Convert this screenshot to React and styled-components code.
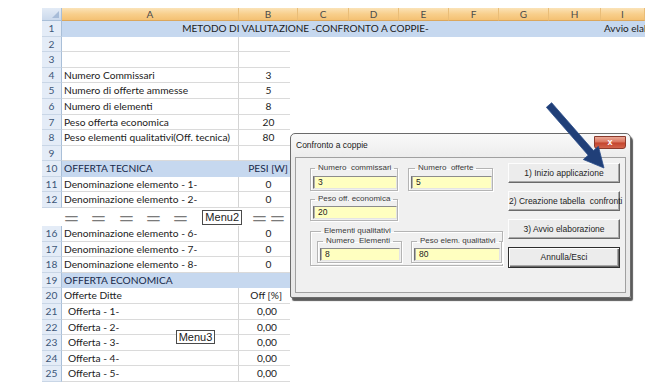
import React from 'react';
import styled, { createGlobalStyle } from 'styled-components';

const Global = createGlobalStyle`
  html, body { margin: 0; padding: 0; background: #fff; }
  body { font-family: Lato, "Liberation Sans", sans-serif; }
  * { box-sizing: border-box; }
`;

const ROW_H = 15.55;
const CELL_FS = 10.2;

const Page = styled.div`
  position: relative;
  width: 672px;
  height: 390px;
  overflow: hidden;
  padding: 8px 0 0 42px;
`;

const Sheet = styled.div`
  display: flex;
  flex-direction: column;
  width: 603px;
`;

const HeaderRow = styled.div`
  display: grid;
  grid-template-columns: 20px 177px 59px 51px 50px 50px 50px 50px 52px 44px;
  height: 13.3px;
`;

const Corner = styled.div`
  position: relative;
  background: linear-gradient(#e3ebf6, #cbd9ec);
  border-right: 1px solid #a9bfd8;
  border-bottom: 1px solid #a9bfd8;
  &::after {
    content: '';
    position: absolute;
    right: 2px;
    bottom: 2px;
    border-style: solid;
    border-width: 0 0 7px 7px;
    border-color: transparent transparent #a7bcd8 transparent;
  }
`;

const ColHead = styled.div`
  background: linear-gradient(#fbe3b8, #f8cf8c 50%, #f4c173);
  border-right: 1px solid #e9bd78;
  border-bottom: 1px solid #dba75d;
  font-size: 10px;
  line-height: 12.3px;
  color: #4b4b4b;
  text-align: center;
`;

const TitleRow = styled.div`
  display: grid;
  grid-template-columns: 20px 487px 52px 44px;
  height: ${ROW_H}px;
`;

const NumCell = styled.div`
  background: #e4ecf7;
  border-right: 1px solid #a9bfd8;
  border-bottom: 1px solid #c9d6e6;
  font-size: 10.2px;
  line-height: ${ROW_H - 1}px;
  color: #3c5677;
  text-align: center;
`;

const BandCell = styled.div`
  background: #c6d8ef;
  font-size: 10px;
  line-height: ${ROW_H}px;
  color: #1b1b1b;
  text-align: ${(p) => p.$align || 'left'};
  white-space: nowrap;
  overflow: hidden;
  padding-left: ${(p) => (p.$align === 'left' ? '3px' : '0')};
`;

const Row = styled.div`
  display: grid;
  grid-template-columns: 20px 177px 51px;
  height: ${ROW_H}px;
`;

const LabelCell = styled.div`
  background: ${(p) => (p.$band ? '#c6d8ef' : '#fff')};
  border-right: 1px solid ${(p) => (p.$band ? '#c6d8ef' : '#d4d4d4')};
  border-bottom: 1px solid ${(p) => (p.$band ? '#c6d8ef' : '#dadada')};
  font-size: ${CELL_FS}px;
  line-height: ${ROW_H - 1}px;
  color: ${(p) => (p.$band ? '#17294a' : '#1b1b1b')};
  padding-left: ${(p) => (p.$indent ? 6 : 2)}px;
  white-space: nowrap;
  overflow: hidden;
`;

const ValueCell = styled.div`
  background: ${(p) => (p.$band ? '#c6d8ef' : '#fff')};
  border-bottom: 1px solid ${(p) => (p.$band ? '#c6d8ef' : '#dadada')};
  font-size: ${CELL_FS}px;
  line-height: ${ROW_H - 1}px;
  color: ${(p) => (p.$band ? '#17294a' : '#1b1b1b')};
  text-align: ${(p) => p.$align};
  padding-left: ${(p) => (p.$align === 'center' ? 8 : 0)}px;
  padding-right: ${(p) => p.$pr || 0}px;
  white-space: nowrap;
`;

const SepRow = styled.div`
  display: flex;
  align-items: center;
  height: 18.4px;
  padding-left: 22px;
`;

const EqSlot = styled.span`
  display: inline-block;
  width: ${(p) => p.$w}px;
  height: 18px;
`;

const Eq = styled.span`
  display: inline-block;
  font-family: "Liberation Sans", Arial, sans-serif;
  font-size: 17px;
  line-height: 18px;
  color: #7a7a7a;
  transform: scaleX(1.5);
  transform-origin: left center;
`;

const MenuTag = styled.div`
  width: ${(p) => p.$w}px;
  height: ${(p) => p.$h}px;
  border: 1px solid #4a4a4a;
  background: #fff;
  font-family: "Liberation Sans", Arial, sans-serif;
  font-size: 11px;
  line-height: ${(p) => p.$h - 2}px;
  text-align: center;
  color: #1b1b1b;
  margin: ${(p) => p.$m || '0'};
`;

const FloatMenu = styled(MenuTag)`
  position: absolute;
  left: 176px;
  top: 330px;
`;

const ArrowSvg = styled.svg`
  position: absolute;
  left: 540px;
  top: 100px;
  width: 70px;
  height: 72px;
`;

const Dialog = styled.div`
  position: absolute;
  left: 290px;
  top: 133px;
  width: 341px;
  height: 165px;
  border: 1px solid #6b6b6b;
  border-radius: 5px 5px 2px 2px;
  background: linear-gradient(#f9f9f9, #ececec 24px, #e8e8e8);
  box-shadow: 2px 3px 1px rgba(50, 50, 50, 0.8);
  display: flex;
  flex-direction: column;
  padding: 0 4px 4px 4px;
  font-family: "Liberation Sans", Arial, sans-serif;
`;

const TitleBar = styled.div`
  height: 23px;
  display: flex;
  justify-content: space-between;
  align-items: flex-start;
`;

const TitleText = styled.span`
  font-size: 8.5px;
  line-height: 23px;
  color: #1a1a1a;
  padding-left: 1px;
`;

const CloseBtn = styled.div`
  margin-top: 2px;
  width: 32px;
  height: 13px;
  border: 1px solid #8a3a2c;
  border-radius: 0 0 3px 3px;
  background: linear-gradient(#eaa896, #d9735d 48%, #c4432c 52%, #d2644c);
  color: #fff;
  font-weight: bold;
  font-size: 9px;
  line-height: 11px;
  text-align: center;
`;

const Client = styled.div`
  flex: 1;
  background: #f0f0f0;
  border: 1px solid #a0a0a0;
  display: flex;
  padding: 5px 6px 0 14px;
  gap: 5px;
`;

const LeftCol = styled.div`
  width: 193px;
  display: flex;
  flex-direction: column;
`;

const FieldLine = styled.div`
  display: flex;
  gap: ${(p) => p.$gap || 0}px;
  margin-top: ${(p) => p.$mt || 0}px;
`;

const Group = styled.fieldset`
  margin: 0;
  min-width: 0;
  width: ${(p) => p.$w}px;
  padding: ${(p) => p.$pad};
  border: 1px solid #b4b4b4;
  box-shadow: inset 1px 1px 0 #fff, 1px 1px 0 #fff;
`;

const Legend = styled.legend`
  font-size: 8px;
  line-height: 10px;
  color: #3a3a3a;
  padding: 0 3px;
  margin-left: ${(p) => p.$ml || 4}px;
  white-space: pre;
`;

const TextBox = styled.div`
  height: 13px;
  margin: 0 ${(p) => p.$mr || 0}px 0 2px;
  background: #ffffc0;
  border-top: 1px solid #8c8c8c;
  border-left: 1px solid #6e6e6e;
  border-bottom: 1px solid #e4e4e4;
  border-right: 1px solid #e4e4e4;
  box-shadow: inset 1px 0 0 #b0b0b0;
  font-size: 8.5px;
  line-height: 11px;
  padding-left: 4px;
  color: #222;
`;

const RightCol = styled.div`
  width: 112px;
  display: flex;
  flex-direction: column;
  gap: 8px;
`;

const Button = styled.div`
  height: ${(p) => (p.$default ? 21 : 20)}px;
  background: #ececec;
  border: 1px solid;
  border-color: ${(p) => (p.$default ? '#2e2e2e' : '#fdfdfd #6a6a6a #6a6a6a #fdfdfd')};
  box-shadow: ${(p) =>
    p.$default
      ? 'inset 1px 1px 0 #fff, inset -1px -1px 0 #6a6a6a, inset -2px -2px 0 #a8a8a8'
      : 'inset -1px -1px 0 #a8a8a8'};
  font-size: 8.5px;
  line-height: ${(p) => (p.$default ? 19 : 18)}px;
  text-align: center;
  color: #1e1e1e;
  white-space: pre;
`;

const topRows = [
  { n: 2 },
  { n: 3 },
  { n: 4, a: 'Numero Commissari', b: '3' },
  { n: 5, a: 'Numero di offerte ammesse', b: '5' },
  { n: 6, a: 'Numero di elementi', b: '8' },
  { n: 7, a: 'Peso offerta economica', b: '20' },
  { n: 8, a: 'Peso elementi qualitativi(Off. tecnica)', b: '80' },
  { n: 9 },
  { n: 10, a: 'OFFERTA TECNICA', b: 'PESI [W]', band: true, align: 'right', pr: 2 },
  { n: 11, a: 'Denominazione elemento - 1-', b: '0' },
  { n: 12, a: 'Denominazione elemento - 2-', b: '0' },
];

const bottomRows = [
  { n: 16, a: 'Denominazione elemento - 6-', b: '0' },
  { n: 17, a: 'Denominazione elemento - 7-', b: '0' },
  { n: 18, a: 'Denominazione elemento - 8-', b: '0' },
  { n: 19, a: 'OFFERTA ECONOMICA', band: true },
  { n: 20, a: 'Offerte Ditte', b: 'Off [%]', align: 'right', pr: 8 },
  ...[1, 2, 3, 4, 5].map((i) => ({
    n: 20 + i,
    a: `Offerta - ${i}-`,
    b: '0,00',
    indent: true,
    align: 'right',
    pr: 13,
  })),
];

function SheetRow({ r }) {
  return (
    <Row>
      <NumCell>{r.n}</NumCell>
      <LabelCell $band={r.band} $indent={r.indent}>
        {r.a}
      </LabelCell>
      <ValueCell $band={r.band} $align={r.align || 'center'} $pr={r.pr}>
        {r.b}
      </ValueCell>
    </Row>
  );
}

const cols = ['A', 'B', 'C', 'D', 'E', 'F', 'G', 'H', 'I'];

export default function App() {
  return (
    <Page>
      <Global />
      <Sheet>
        <HeaderRow>
          <Corner />
          {cols.map((c) => (
            <ColHead key={c}>{c}</ColHead>
          ))}
        </HeaderRow>
        <TitleRow>
          <NumCell>1</NumCell>
          <BandCell $align="center">METODO DI VALUTAZIONE -CONFRONTO A COPPIE-</BandCell>
          <BandCell />
          <BandCell $align="left">Avvio elaborazione</BandCell>
        </TitleRow>
        {topRows.map((r) => (
          <SheetRow key={r.n} r={r} />
        ))}
        <SepRow>
          {[0, 1, 2, 3, 4].map((i) => (
            <EqSlot key={i} $w={i === 4 ? 29 : 27.3}>
              <Eq>=</Eq>
            </EqSlot>
          ))}
          <MenuTag $w={40} $h={15} $m="0 10px 0 0">Menu2</MenuTag>
          <EqSlot $w={18}>
            <Eq>=</Eq>
          </EqSlot>
          <EqSlot $w={16}>
            <Eq>=</Eq>
          </EqSlot>
        </SepRow>
        {bottomRows.map((r) => (
          <SheetRow key={r.n} r={r} />
        ))}
      </Sheet>

      <FloatMenu $w={39} $h={14}>Menu3</FloatMenu>

      <Dialog>
        <TitleBar>
          <TitleText>Confronto a coppie</TitleText>
          <CloseBtn>x</CloseBtn>
        </TitleBar>
        <Client>
          <LeftCol>
            <FieldLine $gap={10}>
              <Group $w={88} $pad="3px 0 1px 0">
                <Legend>{'Numero  commissari'}</Legend>
                <TextBox>3</TextBox>
              </Group>
              <Group $w={85} $pad="3px 0 1px 0">
                <Legend $ml={6}>{'Numero  offerte'}</Legend>
                <TextBox>5</TextBox>
              </Group>
            </FieldLine>
            <FieldLine $mt={3}>
              <Group $w={88} $pad="2px 0 1px 0">
                <Legend>{'Peso off. economica'}</Legend>
                <TextBox>20</TextBox>
              </Group>
            </FieldLine>
            <FieldLine $mt={5}>
              <Group $w={193} $pad="0 0 2px 6px">
                <Legend>{'Elementi qualitativi'}</Legend>
                <FieldLine $gap={9}>
                  <Group $w={85} $pad="2px 0 1px 0">
                    <Legend $ml={5}>{'Numero  Elementi'}</Legend>
                    <TextBox $mr={1}>8</TextBox>
                  </Group>
                  <Group $w={91} $pad="2px 0 1px 0">
                    <Legend $ml={5}>{'Peso elem. qualitativi'}</Legend>
                    <TextBox $mr={1}>80</TextBox>
                  </Group>
                </FieldLine>
              </Group>
            </FieldLine>
          </LeftCol>
          <RightCol>
            <Button>1) Inizio applicazione</Button>
            <Button>{'2) Creazione tabella  confronti'}</Button>
            <Button>3) Avvio elaborazione</Button>
            <Button $default>Annulla/Esci</Button>
          </RightCol>
        </Client>
      </Dialog>

      <ArrowSvg viewBox="0 0 70 72">
        <polygon
          points="11.64,2.70 53.48,50.62 58.38,46.34 64,68 43.30,59.50 48.20,55.22 6.36,7.30"
          fill="#203f78"
          stroke="#2c4f8c"
          strokeWidth="0.8"
          strokeLinejoin="round"
        />
      </ArrowSvg>
    </Page>
  );
}
